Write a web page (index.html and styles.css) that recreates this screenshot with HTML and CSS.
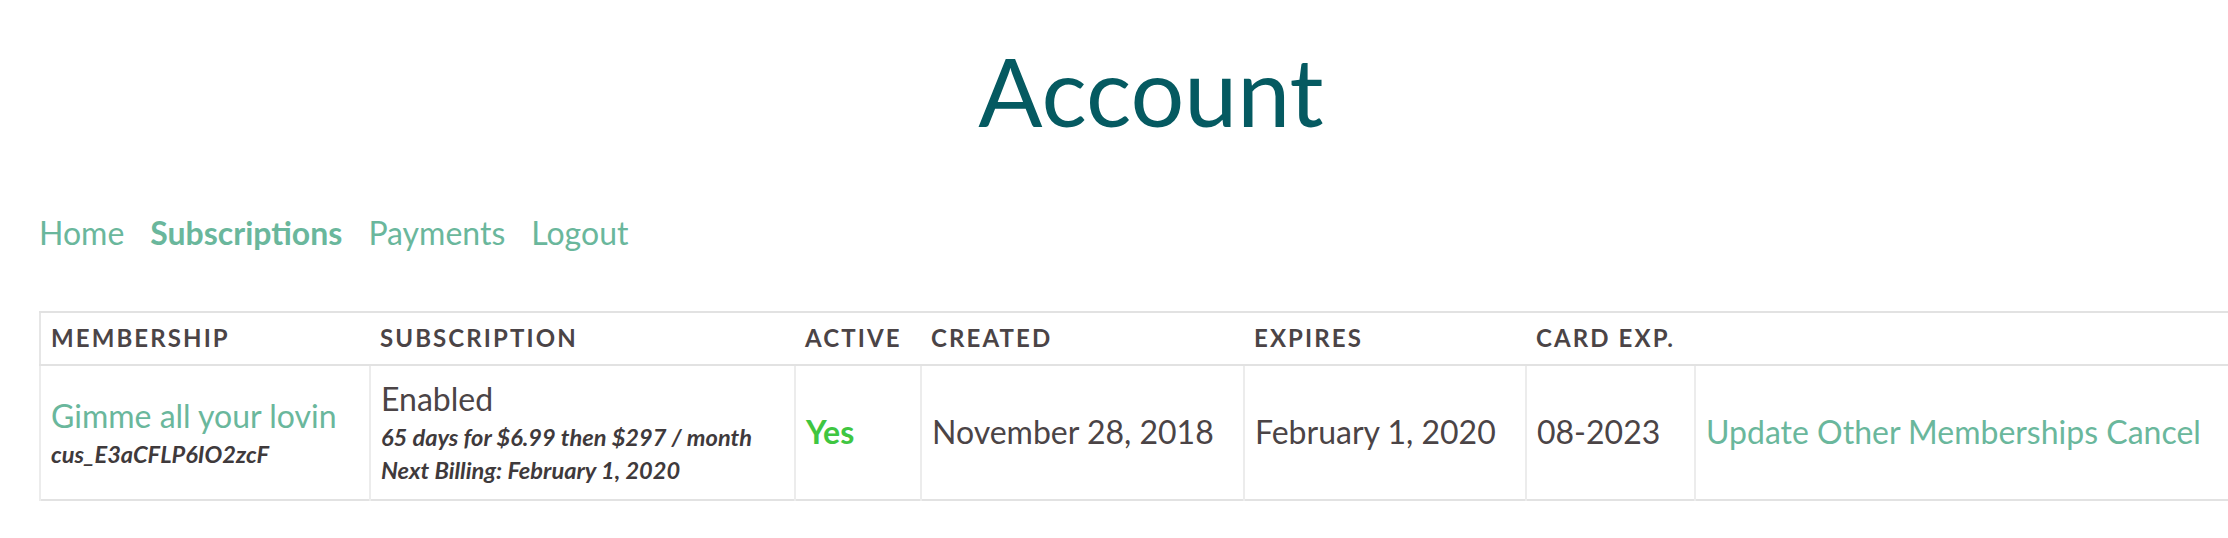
FILE: index.html
```html
<!DOCTYPE html>
<html lang="en">
<head>
<meta charset="utf-8">
<title>Account</title>
<link rel="stylesheet" href="styles.css">
</head>
<body>
<div class="page">
  <h1 class="title">Account</h1>
  <nav class="nav">
    <a href="#" class="nav-link">Home</a>
    <a href="#" class="nav-link nav-link--active">Subscriptions</a>
    <a href="#" class="nav-link">Payments</a>
    <a href="#" class="nav-link">Logout</a>
  </nav>
  <table class="subs">
    <colgroup>
      <col class="c-membership">
      <col class="c-subscription">
      <col class="c-active">
      <col class="c-created">
      <col class="c-expires">
      <col class="c-card">
      <col class="c-actions">
    </colgroup>
    <thead>
      <tr>
        <th>Membership</th>
        <th>Subscription</th>
        <th>Active</th>
        <th>Created</th>
        <th>Expires</th>
        <th>Card Exp.</th>
        <th></th>
      </tr>
    </thead>
    <tbody>
      <tr>
        <td>
          <a href="#" class="link">Gimme all your lovin</a>
          <div class="meta">cus_E3aCFLP6IO2zcF</div>
        </td>
        <td>
          <div class="status">Enabled</div>
          <div class="meta">65 days for $6.99 then $297 / month</div>
          <div class="meta">Next Billing: February 1, 2020</div>
        </td>
        <td><span class="yes">Yes</span></td>
        <td>November 28, 2018</td>
        <td>February 1, 2020</td>
        <td>08-2023</td>
        <td><a href="#" class="link">Update</a> <a href="#" class="link">Other Memberships</a> <a href="#" class="link">Cancel</a></td>
      </tr>
    </tbody>
  </table>
</div>
</body>
</html>
```

FILE: styles.css
```css
html, body {
  margin: 0;
  padding: 0;
  background: #ffffff;
  overflow: hidden;
}

body {
  font-family: Lato, "Open Sans", "Liberation Sans", sans-serif;
  color: #4b4446;
}

.page {
  margin-left: 39px;
  width: 2224px;
}

.title {
  margin: 30px 0 0;
  font-size: 95px;
  line-height: 120px;
  font-weight: 400;
  text-align: center;
  color: #055a61;
}

.nav {
  display: flex;
  gap: 26px;
  margin-top: 59px;
  font-size: 32px;
  line-height: 48px;
}

.nav-link {
  color: #6ab79c;
  text-decoration: none;
}

.nav-link--active {
  font-weight: 700;
}

.subs {
  margin-top: 54px;
  width: 2224px;
  table-layout: fixed;
  border-collapse: collapse;
  border-top: 2px solid #e2e2e2;
  border-bottom: 2px solid #e2e2e2;
  border-left: 2px solid #e6e6e6;
}

.c-membership { width: 330px; }
.c-subscription { width: 425px; }
.c-active { width: 126px; }
.c-created { width: 323px; }
.c-expires { width: 282px; }
.c-card { width: 169px; }
.c-actions { width: 569px; }

.subs th {
  padding: 7px 10px 8px;
  font-size: 24px;
  line-height: 36px;
  font-weight: 700;
  letter-spacing: 2.1px;
  text-transform: uppercase;
  text-align: left;
  color: #4b4446;
  border-bottom: 2px solid #e2e2e2;
  white-space: nowrap;
}

.subs td {
  padding: 10px 10px 12px;
  font-size: 32px;
  line-height: 45px;
  vertical-align: middle;
  border-left: 2px solid #ececec;
  white-space: nowrap;
  color: #4b4446;
}

.link {
  color: #6ab79c;
  text-decoration: none;
}

.meta {
  font-size: 23.6px;
  line-height: 33px;
  font-style: italic;
  font-weight: 700;
  color: #3f3a3c;
}

.status {
  line-height: 45px;
}

.yes {
  color: #3fc641;
  font-weight: 700;
}
```
